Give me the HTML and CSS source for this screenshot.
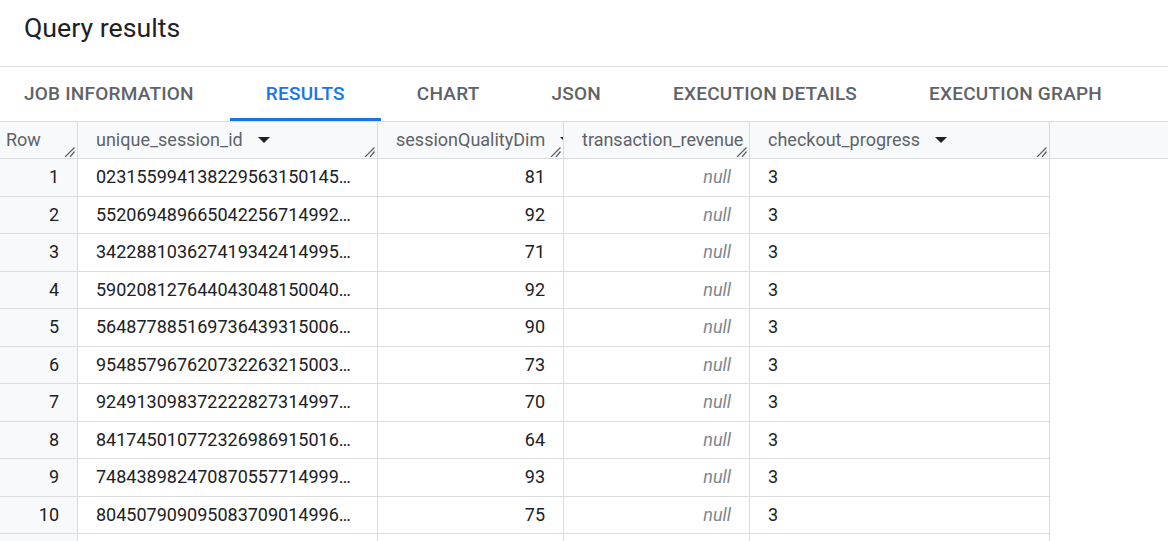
FILE: index.html
```html
<!DOCTYPE html>
<html>
<head>
<meta charset="utf-8">
<link rel="stylesheet" href="styles.css">
</head>
<body>
<div class="page">
  <div class="title">Query results</div>
  <div class="tabs">
    <div class="tab first">JOB INFORMATION</div>
    <div class="tab active">RESULTS</div>
    <div class="tab">CHART</div>
    <div class="tab">JSON</div>
    <div class="tab">EXECUTION DETAILS</div>
    <div class="tab">EXECUTION GRAPH</div>
  </div>
  <div class="grid">
    <div class="hrow">
      <div class="hcell rowhead"><span class="htext">Row</span><svg class="grip" viewBox="0 0 12 10" width="12" height="10"><path d="M11.5 0.5 L2 10 M11.5 4.5 L7 10" /></svg></div>
      <div class="hcell"><span class="htext">unique_session_id</span><svg class="sort" viewBox="0 0 12 6" width="12" height="6"><path d="M0 0 H12 L6 6 Z"/></svg><svg class="grip" viewBox="0 0 12 10" width="12" height="10"><path d="M11.5 0.5 L2 10 M11.5 4.5 L7 10" /></svg></div>
      <div class="hcell"><span class="htext">sessionQualityDim</span><svg class="sort" viewBox="0 0 12 6" width="12" height="6"><path d="M0 0 H12 L6 6 Z"/></svg><svg class="grip" viewBox="0 0 12 10" width="12" height="10"><path d="M11.5 0.5 L2 10 M11.5 4.5 L7 10" /></svg></div>
      <div class="hcell"><span class="htext">transaction_revenue</span><svg class="sort" viewBox="0 0 12 6" width="12" height="6"><path d="M0 0 H12 L6 6 Z"/></svg><svg class="grip" viewBox="0 0 12 10" width="12" height="10"><path d="M11.5 0.5 L2 10 M11.5 4.5 L7 10" /></svg></div>
      <div class="hcell"><span class="htext">checkout_progress</span><svg class="sort" viewBox="0 0 12 6" width="12" height="6"><path d="M0 0 H12 L6 6 Z"/></svg><svg class="grip" viewBox="0 0 12 10" width="12" height="10"><path d="M11.5 0.5 L2 10 M11.5 4.5 L7 10" /></svg></div>
      <div class="hcell filler"></div>
    </div>

    <div class="brow"><div class="cell num rownum">1</div><div class="cell txt">023155994138229563150145…</div><div class="cell num">81</div><div class="cell num null">null</div><div class="cell txt">3</div></div>
    <div class="brow"><div class="cell num rownum">2</div><div class="cell txt">552069489665042256714992…</div><div class="cell num">92</div><div class="cell num null">null</div><div class="cell txt">3</div></div>
    <div class="brow"><div class="cell num rownum">3</div><div class="cell txt">342288103627419342414995…</div><div class="cell num">71</div><div class="cell num null">null</div><div class="cell txt">3</div></div>
    <div class="brow"><div class="cell num rownum">4</div><div class="cell txt">590208127644043048150040…</div><div class="cell num">92</div><div class="cell num null">null</div><div class="cell txt">3</div></div>
    <div class="brow"><div class="cell num rownum">5</div><div class="cell txt">564877885169736439315006…</div><div class="cell num">90</div><div class="cell num null">null</div><div class="cell txt">3</div></div>
    <div class="brow"><div class="cell num rownum">6</div><div class="cell txt">954857967620732263215003…</div><div class="cell num">73</div><div class="cell num null">null</div><div class="cell txt">3</div></div>
    <div class="brow"><div class="cell num rownum">7</div><div class="cell txt">924913098372222827314997…</div><div class="cell num">70</div><div class="cell num null">null</div><div class="cell txt">3</div></div>
    <div class="brow"><div class="cell num rownum">8</div><div class="cell txt">841745010772326986915016…</div><div class="cell num">64</div><div class="cell num null">null</div><div class="cell txt">3</div></div>
    <div class="brow"><div class="cell num rownum">9</div><div class="cell txt">748438982470870557714999…</div><div class="cell num">93</div><div class="cell num null">null</div><div class="cell txt">3</div></div>
    <div class="brow"><div class="cell num rownum">10</div><div class="cell txt">804507909095083709014996…</div><div class="cell num">75</div><div class="cell num null">null</div><div class="cell txt">3</div></div>
    <div class="brow"><div class="cell num rownum"></div><div class="cell txt"></div><div class="cell num"></div><div class="cell num null"></div><div class="cell txt"></div></div>
  </div>
</div>
</body>
</html>
```

FILE: styles.css
```css
* { box-sizing: border-box; }
html, body { margin: 0; padding: 0; background: #fff; }
body {
  font-family: Roboto, "Liberation Sans", sans-serif;
  color: #202124;
  overflow: hidden;
}
.page { width: 1168px; height: 541px; overflow: hidden; }

.title {
  height: 67px;
  padding: 13px 24px 0;
  font-size: 26.7px;
  line-height: 30px;
  font-weight: 400;
  color: #202124;
  border-bottom: 1px solid #dadce0;
}

.tabs {
  display: flex;
  height: 54px;
}
.tab {
  padding: 3px 36px 0;
  line-height: 48px;
  border-bottom: 3px solid transparent;
  font-size: 19px;
  font-weight: 500;
  letter-spacing: 0.22px;
  color: #5f6368;
  white-space: nowrap;
}
.tab.first { padding-left: 24px; }
.tab.active {
  color: #1a73e8;
  border-bottom-color: #1a73e8;
}

.grid { border-top: 1px solid #dadce0; }

.hrow {
  display: grid;
  grid-template-columns: 78px 300px 186px 186px 300px 1fr;
  background: #f8f9fa;
}
.hcell {
  position: relative;
  height: 37px;
  display: flex;
  align-items: center;
  gap: 15px;
  padding-left: 18px;
  border-right: 1px solid #dadce0;
  border-bottom: 1px solid #dadce0;
  overflow: hidden;
  white-space: nowrap;
  font-size: 18px;
  line-height: 36px;
  color: #5f6368;
}
.hcell.rowhead { padding-left: 6px; }
.hcell.filler { border-right: none; }
.htext { flex: none; }
.sort { flex: none; fill: #202124; margin-top: -1px; }
.grip {
  position: absolute;
  right: 2px;
  bottom: 1px;
  fill: none;
  stroke: #5f6368;
  stroke-width: 1.3;
}

.brow {
  display: grid;
  grid-template-columns: 78px 300px 186px 186px 300px;
  width: 1050px;
}
.cell {
  height: 37.5px;
  padding: 0 18px;
  border-right: 1px solid #dadce0;
  border-bottom: 1px solid #dadce0;
  font-size: 18px;
  line-height: 36.5px;
  white-space: nowrap;
  overflow: hidden;
  color: #202124;
}
.cell.num { text-align: right; }
.cell.rownum { background: #f8f9fa; }
.cell.null { font-style: italic; color: #80868b; }
```
